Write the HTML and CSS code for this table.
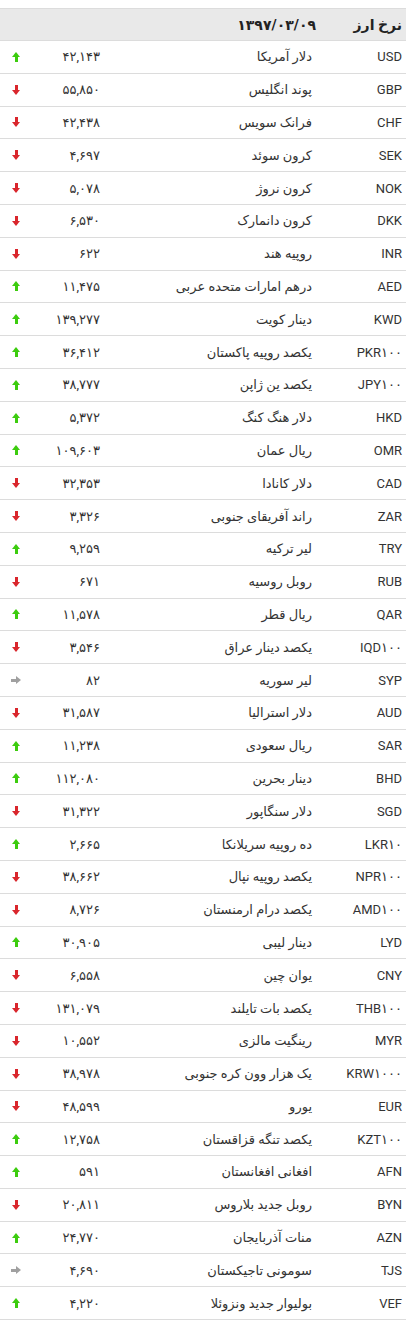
FILE: index.html
```html
<!DOCTYPE html>
<html lang="fa" dir="rtl">
<head>
<meta charset="utf-8">
<link rel="stylesheet" href="styles.css">
<title>نرخ ارز</title>
</head>
<body>
<div class="rates">
  <div class="row head"><div class="code">نرخ ارز</div><div class="name">۱۳۹۷/۰۳/۰۹</div><div class="val"></div><div class="dir"></div></div>
  <div class="row"><div class="code">USD</div><div class="name">دلار آمریکا</div><div class="val">۴۲,۱۴۳</div><div class="dir"><span class="ar up"></span></div></div>
  <div class="row"><div class="code">GBP</div><div class="name">پوند انگلیس</div><div class="val">۵۵,۸۵۰</div><div class="dir"><span class="ar down"></span></div></div>
  <div class="row"><div class="code">CHF</div><div class="name">فرانک سویس</div><div class="val">۴۲,۴۳۸</div><div class="dir"><span class="ar down"></span></div></div>
  <div class="row"><div class="code">SEK</div><div class="name">کرون سوئد</div><div class="val">۴,۶۹۷</div><div class="dir"><span class="ar down"></span></div></div>
  <div class="row"><div class="code">NOK</div><div class="name">کرون نروژ</div><div class="val">۵,۰۷۸</div><div class="dir"><span class="ar down"></span></div></div>
  <div class="row"><div class="code">DKK</div><div class="name">کرون دانمارک</div><div class="val">۶,۵۳۰</div><div class="dir"><span class="ar down"></span></div></div>
  <div class="row"><div class="code">INR</div><div class="name">روپیه هند</div><div class="val">۶۲۲</div><div class="dir"><span class="ar down"></span></div></div>
  <div class="row"><div class="code">AED</div><div class="name">درهم امارات متحده عربی</div><div class="val">۱۱,۴۷۵</div><div class="dir"><span class="ar up"></span></div></div>
  <div class="row"><div class="code">KWD</div><div class="name">دینار کویت</div><div class="val">۱۳۹,۲۷۷</div><div class="dir"><span class="ar up"></span></div></div>
  <div class="row"><div class="code">PKR۱۰۰</div><div class="name">یکصد روپیه پاکستان</div><div class="val">۳۶,۴۱۲</div><div class="dir"><span class="ar up"></span></div></div>
  <div class="row"><div class="code">JPY۱۰۰</div><div class="name">یکصد ین ژاپن</div><div class="val">۳۸,۷۷۷</div><div class="dir"><span class="ar up"></span></div></div>
  <div class="row"><div class="code">HKD</div><div class="name">دلار هنگ کنگ</div><div class="val">۵,۳۷۲</div><div class="dir"><span class="ar up"></span></div></div>
  <div class="row"><div class="code">OMR</div><div class="name">ریال عمان</div><div class="val">۱۰۹,۶۰۳</div><div class="dir"><span class="ar up"></span></div></div>
  <div class="row"><div class="code">CAD</div><div class="name">دلار کانادا</div><div class="val">۳۲,۳۵۳</div><div class="dir"><span class="ar down"></span></div></div>
  <div class="row"><div class="code">ZAR</div><div class="name">راند آفریقای جنوبی</div><div class="val">۳,۳۲۶</div><div class="dir"><span class="ar down"></span></div></div>
  <div class="row"><div class="code">TRY</div><div class="name">لیر ترکیه</div><div class="val">۹,۲۵۹</div><div class="dir"><span class="ar up"></span></div></div>
  <div class="row"><div class="code">RUB</div><div class="name">روبل روسیه</div><div class="val">۶۷۱</div><div class="dir"><span class="ar down"></span></div></div>
  <div class="row"><div class="code">QAR</div><div class="name">ریال قطر</div><div class="val">۱۱,۵۷۸</div><div class="dir"><span class="ar up"></span></div></div>
  <div class="row"><div class="code">IQD۱۰۰</div><div class="name">یکصد دینار عراق</div><div class="val">۳,۵۴۶</div><div class="dir"><span class="ar down"></span></div></div>
  <div class="row"><div class="code">SYP</div><div class="name">لیر سوریه</div><div class="val">۸۲</div><div class="dir"><span class="ar same"></span></div></div>
  <div class="row"><div class="code">AUD</div><div class="name">دلار استرالیا</div><div class="val">۳۱,۵۸۷</div><div class="dir"><span class="ar down"></span></div></div>
  <div class="row"><div class="code">SAR</div><div class="name">ریال سعودی</div><div class="val">۱۱,۲۳۸</div><div class="dir"><span class="ar up"></span></div></div>
  <div class="row"><div class="code">BHD</div><div class="name">دینار بحرین</div><div class="val">۱۱۲,۰۸۰</div><div class="dir"><span class="ar up"></span></div></div>
  <div class="row"><div class="code">SGD</div><div class="name">دلار سنگاپور</div><div class="val">۳۱,۳۲۲</div><div class="dir"><span class="ar down"></span></div></div>
  <div class="row"><div class="code">LKR۱۰</div><div class="name">ده روپیه سریلانکا</div><div class="val">۲,۶۶۵</div><div class="dir"><span class="ar up"></span></div></div>
  <div class="row"><div class="code">NPR۱۰۰</div><div class="name">یکصد روپیه نپال</div><div class="val">۳۸,۶۶۲</div><div class="dir"><span class="ar down"></span></div></div>
  <div class="row"><div class="code">AMD۱۰۰</div><div class="name">یکصد درام ارمنستان</div><div class="val">۸,۷۲۶</div><div class="dir"><span class="ar down"></span></div></div>
  <div class="row"><div class="code">LYD</div><div class="name">دینار لیبی</div><div class="val">۳۰,۹۰۵</div><div class="dir"><span class="ar up"></span></div></div>
  <div class="row"><div class="code">CNY</div><div class="name">یوان چین</div><div class="val">۶,۵۵۸</div><div class="dir"><span class="ar down"></span></div></div>
  <div class="row"><div class="code">THB۱۰۰</div><div class="name">یکصد بات تایلند</div><div class="val">۱۳۱,۰۷۹</div><div class="dir"><span class="ar down"></span></div></div>
  <div class="row"><div class="code">MYR</div><div class="name">رینگیت مالزی</div><div class="val">۱۰,۵۵۲</div><div class="dir"><span class="ar down"></span></div></div>
  <div class="row"><div class="code">KRW۱۰۰۰</div><div class="name">یک هزار وون کره جنوبی</div><div class="val">۳۸,۹۷۸</div><div class="dir"><span class="ar down"></span></div></div>
  <div class="row"><div class="code">EUR</div><div class="name">یورو</div><div class="val">۴۸,۵۹۹</div><div class="dir"><span class="ar down"></span></div></div>
  <div class="row"><div class="code">KZT۱۰۰</div><div class="name">یکصد تنگه قزاقستان</div><div class="val">۱۲,۷۵۸</div><div class="dir"><span class="ar up"></span></div></div>
  <div class="row"><div class="code">AFN</div><div class="name">افغانی افغانستان</div><div class="val">۵۹۱</div><div class="dir"><span class="ar up"></span></div></div>
  <div class="row"><div class="code">BYN</div><div class="name">روبل جدید بلاروس</div><div class="val">۲۰,۸۱۱</div><div class="dir"><span class="ar down"></span></div></div>
  <div class="row"><div class="code">AZN</div><div class="name">منات آذربایجان</div><div class="val">۲۴,۷۷۰</div><div class="dir"><span class="ar up"></span></div></div>
  <div class="row"><div class="code">TJS</div><div class="name">سومونی تاجیکستان</div><div class="val">۴,۶۹۰</div><div class="dir"><span class="ar same"></span></div></div>
  <div class="row"><div class="code">VEF</div><div class="name">بولیوار جدید ونزوئلا</div><div class="val">۴,۲۲۰</div><div class="dir"><span class="ar up"></span></div></div>
</div>
</body>
</html>
```
FILE: styles.css
```css
html, body {
  margin: 0;
  padding: 0;
  background: #fff;
}
body {
  padding-top: 8px;
  font-family: Roboto, "DejaVu Sans", sans-serif;
  font-size: 13px;
  color: #333;
}
.rates {
  width: 406px;
  margin-left: 0;
  margin-right: 6px;
  border-top: 1px solid #dcdcdc;
}
.row {
  display: grid;
  grid-template-columns: 90px 1fr 70px 30px;
  align-items: center;
  height: 32.8px;
  box-sizing: border-box;
  border-bottom: 1px solid #dcdcdc;
}
.row.head {
  height: 32px;
  background: #e9e9e9;
  border-bottom: 1px solid #dcdcdc;
  font-weight: bold;
  font-size: 14px;
  color: #222;
}
.code {
  padding-right: 4px;
  text-align: right;
}
.name {
  padding-right: 4px;
  text-align: right;
  white-space: nowrap;
}
.head .name {
  padding-right: 0;
}
.val {
  text-align: right;
  direction: rtl;
}
.dir {
  display: flex;
  justify-content: center;
  padding-left: 2px;
}
.ar {
  position: relative;
  display: block;
  width: 8px;
  height: 10px;
}
.ar::before, .ar::after {
  content: "";
  position: absolute;
}
.ar.up::before {
  left: 0;
  top: 0;
  border-left: 4px solid transparent;
  border-right: 4px solid transparent;
  border-bottom: 5px solid #3ccc0e;
}
.ar.up::after {
  left: 2.5px;
  top: 5px;
  width: 3px;
  height: 5px;
  background: #3ccc0e;
}
.ar.down::before {
  left: 0;
  bottom: 0;
  border-left: 4px solid transparent;
  border-right: 4px solid transparent;
  border-top: 5px solid #d9262c;
}
.ar.down::after {
  left: 2.5px;
  top: 0;
  width: 3px;
  height: 5px;
  background: #d9262c;
}
.ar.same {
  width: 10px;
  height: 8px;
}
.ar.same::before {
  right: 0;
  top: 0;
  border-top: 4px solid transparent;
  border-bottom: 4px solid transparent;
  border-left: 5px solid #a0a0a0;
}
.ar.same::after {
  left: 0;
  top: 2.5px;
  width: 5px;
  height: 3px;
  background: #a0a0a0;
}
```
